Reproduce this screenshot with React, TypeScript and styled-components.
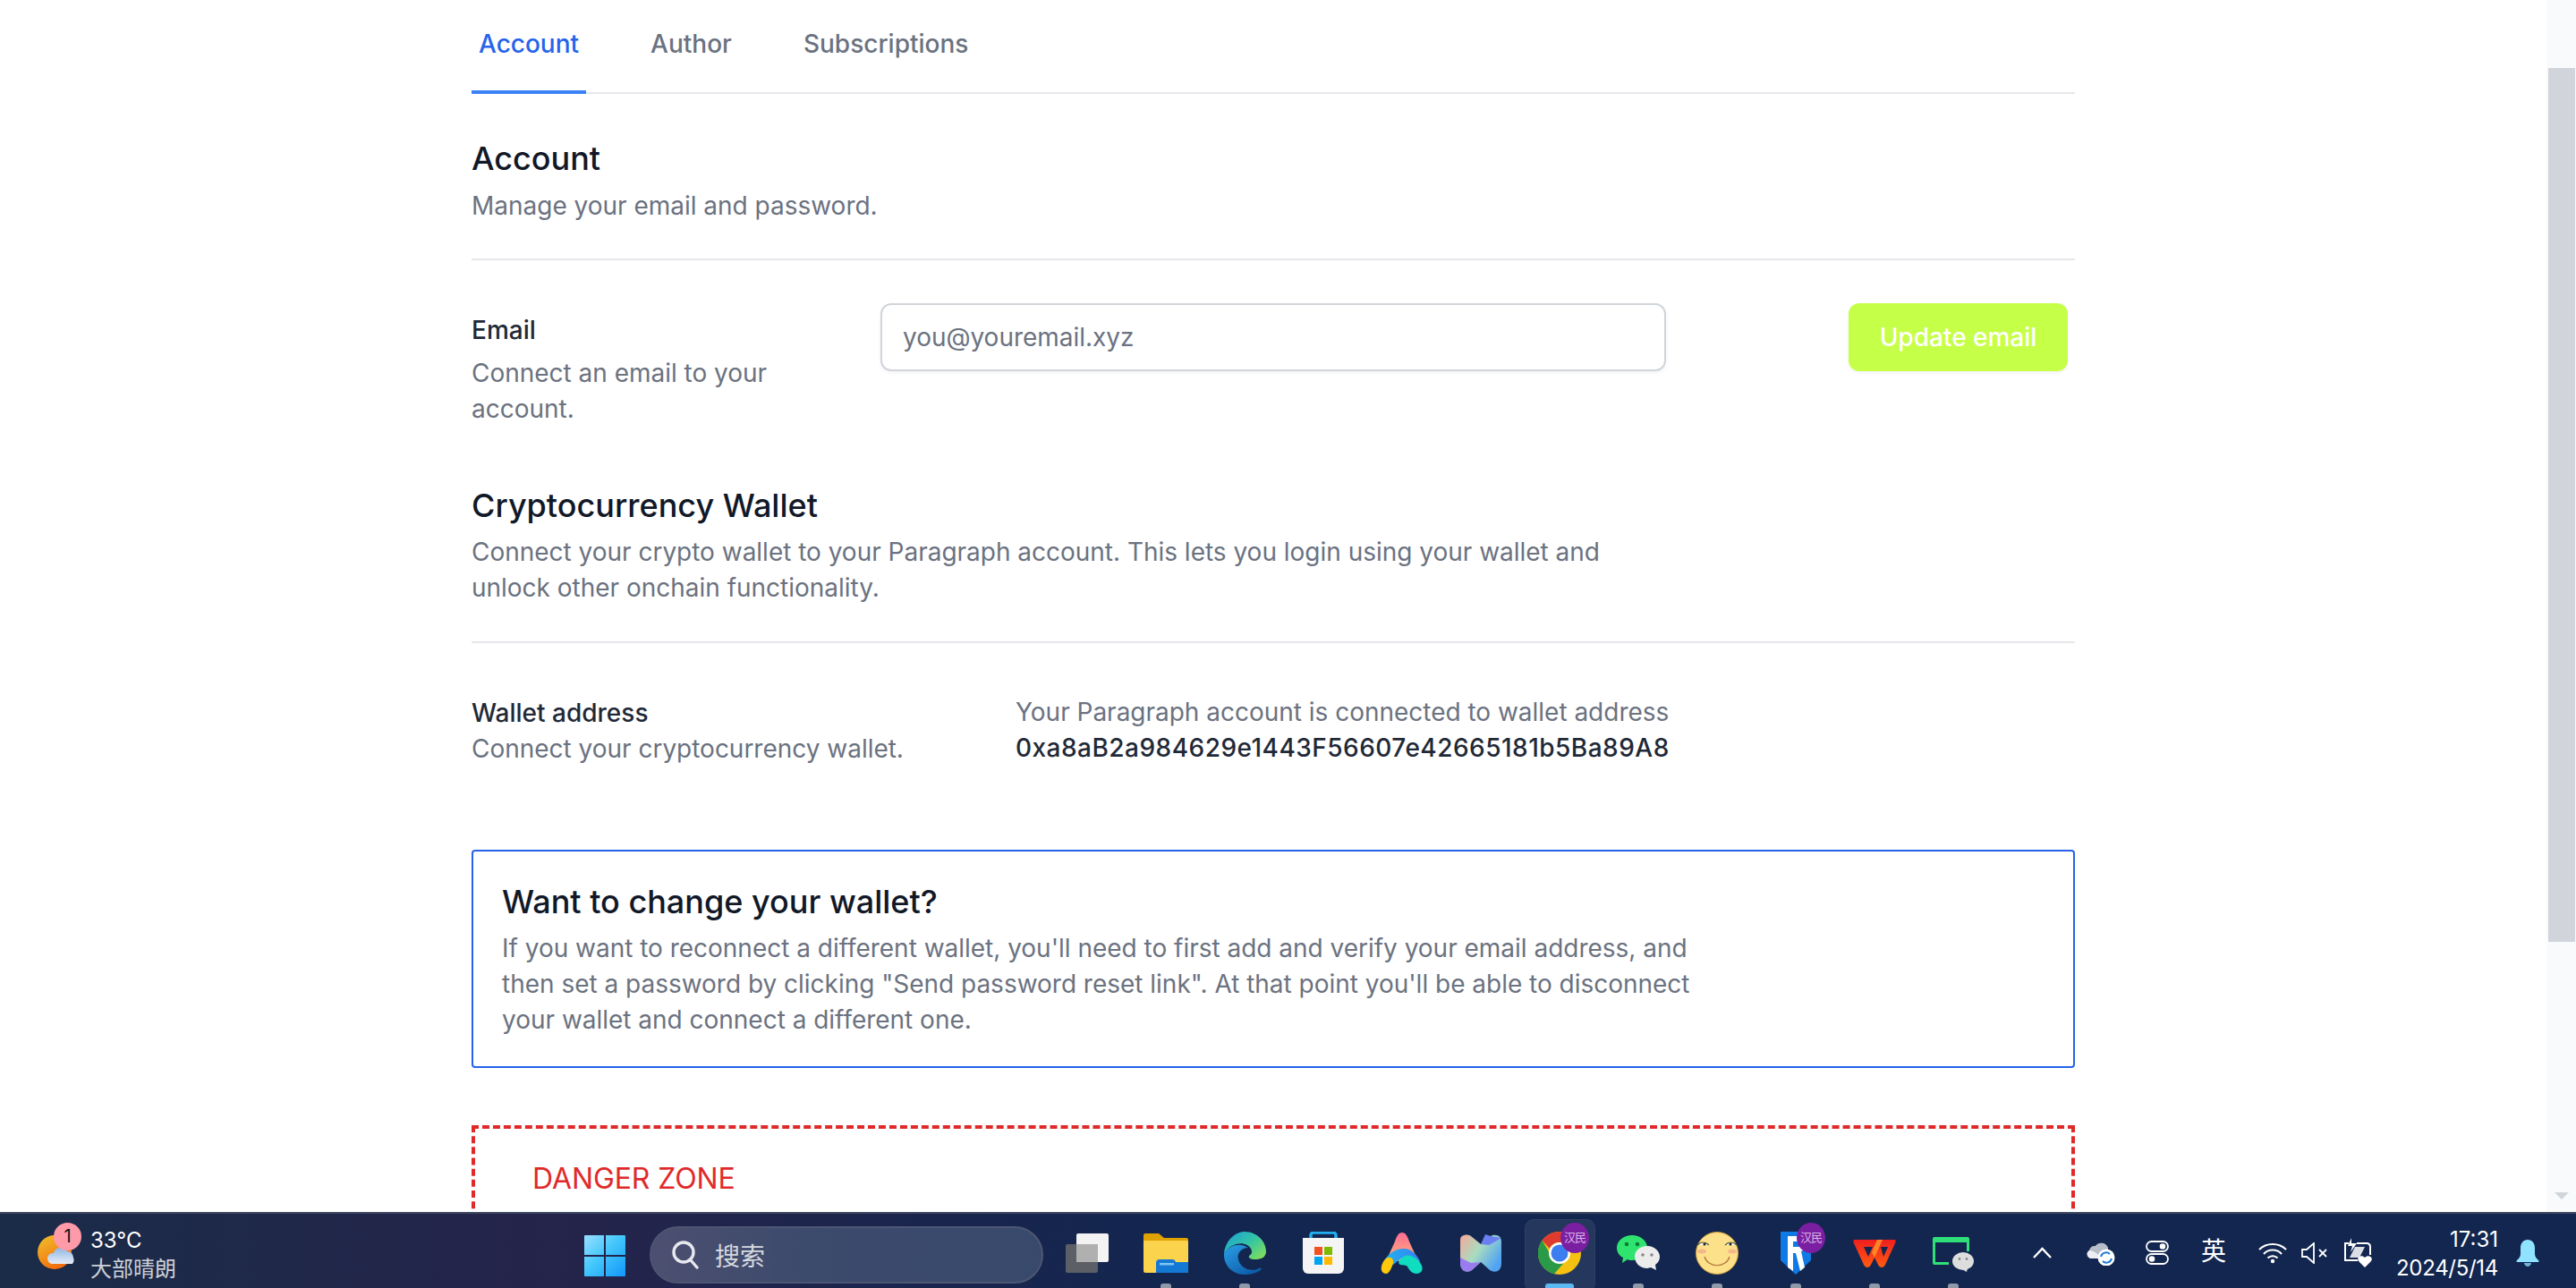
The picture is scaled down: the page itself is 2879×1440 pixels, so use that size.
import React from "react";
import styled, { createGlobalStyle } from "styled-components";

const Global = createGlobalStyle`
  html, body { margin: 0; padding: 0; height: 100%; background: #fff; overflow: hidden; }
  body { font-family: Inter, "Noto Sans CJK SC", sans-serif; }
  #root { height: 100%; }
  * { box-sizing: border-box; }
`;

const Screen = styled.div`
  width: 2879px; height: 1440px; display: flex; flex-direction: column; overflow: hidden;
`;
const Viewport = styled.div`
  height: 1355px; display: flex; overflow: hidden; flex: none;
`;
const PageArea = styled.main`
  flex: 1; min-width: 0; padding-left: 527px; overflow: hidden;
`;
const Content = styled.div`
  width: 1792px;
`;
const Tabs = styled.nav`
  display: flex; gap: 64px; height: 105px; border-bottom: 2px solid #e5e7eb;
`;
const Tab = styled.a<{ $active?: boolean }>`
  height: 105px; padding: 29px 8px 0; font-size: 28px; line-height: 40px; font-weight: 450;
  color: ${p => (p.$active ? "#2563eb" : "#6b7280")};
  border-bottom: 4px solid ${p => (p.$active ? "#3b82f6" : "transparent")};
`;
const Heading = styled.h2<{ $top?: number }>`
  margin: ${p => p.$top ?? 0}px 0 0; font-size: 36px; line-height: 56px; font-weight: 450; color: #111827;
`;
const Muted = styled.p<{ $top?: number; $max?: number }>`
  margin: ${p => p.$top ?? 0}px 0 0; font-size: 28px; line-height: 40px; font-weight: 400; color: #6b7280; letter-spacing: -0.015px;
  max-width: ${p => (p.$max ? `${p.$max}px` : "none")};
`;
const Divider = styled.hr<{ $top: number }>`
  margin: ${p => p.$top}px 0 0; height: 2px; border: 0; background: #e5e7eb;
`;
const EmailRow = styled.div`
  display: flex; align-items: flex-start; margin-top: 48px;
`;
const FieldLabel = styled.div`
  flex: none; width: 457px; padding: 10px 40px 0 0;
`;
const LabelText = styled.div`
  font-size: 28px; line-height: 40px; font-weight: 450; color: #1f2937;
`;
const EmailInput = styled.input`
  flex: none; width: 878px; height: 76px; padding: 0 23px; border: 2px solid #d1d5db; border-radius: 12px;
  font: 400 28px Inter, sans-serif; letter-spacing: -0.03px; color: #111827; background: #fff; box-shadow: 0 2px 4px rgba(0,0,0,.05); outline: none;
  &::placeholder { color: #6b7280; opacity: 1; }
`;
const UpdateButton = styled.button`
  flex: none; width: 245px; height: 76px; margin-left: auto; margin-right: 8px; border: 0; border-radius: 12px;
  background: #c6ff47; color: #fff; font: 500 28px Inter, sans-serif; box-shadow: 0 2px 4px rgba(0,0,0,.05);
`;
const WalletRow = styled.div`
  display: flex; margin-top: 57px;
`;
const WalletLabel = styled.div`
  flex: none; width: 608px; padding-top: 1px;
`;
const WalletAddress = styled.div`
  font-size: 28px; line-height: 40px; font-weight: 500; color: #1f2937; letter-spacing: 0.48px;
`;
const InfoBox = styled.section`
  margin-top: 93px; height: 244px; padding: 28px 32px 0; border: 2px solid #2563eb; border-radius: 4px;
`;
const DangerBox = styled.section`
  margin-top: 64px; height: 300px; padding: 32px 64px; border: 4px dashed #e02a2a;
`;
const DangerTitle = styled.h3`
  margin: 0; font-size: 32px; line-height: 48px; font-weight: 400; color: #e02a2a; letter-spacing: -0.1px;
`;
const ScrollTrack = styled.aside`
  flex: none; width: 33px; height: 1355px; background: #f9fafb; padding: 76px 1px 0 2px; display: flex; flex-direction: column;
`;
const ScrollThumb = styled.div`
  height: 977px; background: #d1d5db;
`;
const ScrollArrow = styled.div`
  margin: 280px auto 0; width: 0; height: 0; border-left: 8px solid transparent; border-right: 8px solid transparent; border-top: 8px solid #d1d5db;
`;

const Taskbar = styled.footer`
  flex: none; height: 85px; display: flex; align-items: stretch; color: #fff;
  border-top: 2px solid #404860;
  background: linear-gradient(90deg, #1a2c48 0, #25244b 620px, #13264f 1300px, #12264f 100%);
`;
const LeftArea = styled.div`
  flex: none; width: 653px; display: flex; padding-left: 42px; align-items: flex-start;
`;
const WeatherIcon = styled.div`
  position: relative; width: 50px; height: 83px; flex: none;
`;
const WeatherBadge = styled.span`
  position: absolute; left: 18px; top: 10px; width: 31px; height: 31px; border-radius: 50%; background: #ff9aa8;
  color: #111; font-size: 20px; line-height: 31px; text-align: center;
`;
const WeatherText = styled.div`
  margin-left: 9px; padding-top: 14px; font-size: 24px; line-height: 32px;
`;
const WeatherSub = styled.div`
  color: #ccd0d8;
`;
const StartCell = styled.div`
  flex: none; width: 73px; padding-top: 24px;
`;
const SearchPill = styled.div`
  flex: none; width: 440px; height: 64px; margin-top: 14px; border-radius: 32px; padding-left: 23px;
  display: flex; align-items: center; gap: 18px; font-size: 28px; color: #d5d8df;
  background: linear-gradient(90deg, #4c4f70, #3c4a6c 40%, #384a6c); border: 2px solid #4d5672;
`;
const Apps = styled.div`
  flex: none; margin-left: 5px; display: flex;
`;
const AppCell = styled.div<{ $active?: boolean }>`
  position: relative; flex: none; width: 88px; height: 83px; display: flex; align-items: center; justify-content: center; padding-top: 5px;
  ${p => p.$active ? `&::before { content: ""; position: absolute; left: 5px; right: 4px; top: 6px; bottom: -4px; border-radius: 10px; background: rgba(255,255,255,.08); border: 1px solid rgba(255,255,255,.05); }` : ""}
  > svg { position: relative; }
`;
const RunDot = styled.span<{ $active?: boolean }>`
  position: absolute; bottom: 0; left: 50%; transform: translateX(-50%); height: 5px; border-radius: 3px 3px 0 0;
  width: ${p => (p.$active ? 32 : 12)}px; background: ${p => (p.$active ? "#5cb8f5" : "#8f99a8")};
`;
const HanBadge = styled.span`
  position: absolute; left: 45px; top: 10px; width: 32px; height: 34px; border-radius: 50%; background: #7b1fa2;
  font-size: 13px; line-height: 32px; text-align: center; color: #d9b3e6; white-space: nowrap; letter-spacing: -1px;
`;
const Tray = styled.div`
  flex: 1; display: flex; align-items: center; padding-left: 0; position: relative;
`;
const TrayItem = styled.div<{ $left: number }>`
  flex: none; margin-left: ${p => p.$left}px; display: flex; align-items: center; padding-top: 4px;
`;
const TrayGlyph = styled.span`
  font-size: 28px; line-height: 1; color: #fff; margin-top: -4px;
`;
const Clock = styled.div`
  flex: none; width: 140px; text-align: right; font-size: 24px; line-height: 32px; padding-top: 7px;
`;
const ClockDate = styled.div`
  letter-spacing: -0.3px;
`;

const SunCloud = () => (
  <svg width="50" height="83" viewBox="0 0 50 83">
    <defs>
      <linearGradient id="sun" x1="0" y1="0" x2="0.6" y2="1">
        <stop offset="0" stopColor="#eec22c" /><stop offset="1" stopColor="#f56a0c" />
      </linearGradient>
      <linearGradient id="cl" x1="0" y1="0" x2="0" y2="1">
        <stop offset="0" stopColor="#8fb4e4" /><stop offset="1" stopColor="#e6eef8" />
      </linearGradient>
    </defs>
    <circle cx="19" cy="43" r="19" fill="url(#sun)" />
    <path d="M20 55a6 6 0 0 1 2-12 8 8 0 0 1 15-2 7 7 0 0 1 7 7 7 7 0 0 1-1 7z" fill="url(#cl)" transform="translate(-4 1)" />
  </svg>
);
const Win = () => (
  <svg width="46" height="46" viewBox="0 0 46 46" style={{ display: "block" }}>
    <defs>
      <linearGradient id="w" x1="0" y1="0" x2="1" y2="1">
        <stop offset="0" stopColor="#9adfff" /><stop offset=".45" stopColor="#45c8fb" /><stop offset="1" stopColor="#1197fb" />
      </linearGradient>
    </defs>
    <path fill="url(#w)" d="M1 0h21v22H0V1a1 1 0 0 1 1-1zM24 0h21a1 1 0 0 1 1 1v21H24zM0 24h22v22H1a1 1 0 0 1-1-1zM24 24h22v21a1 1 0 0 1-1 1H24z" />
  </svg>
);
const SearchGlass = () => (
  <svg width="30" height="32" viewBox="0 0 30 32" fill="none" stroke="#e8e9ee" strokeWidth="3.4" strokeLinecap="round">
    <circle cx="13" cy="13" r="11" /><path d="M21 22l7 8" />
  </svg>
);
const TaskView = () => (
  <svg width="48" height="44" viewBox="0 0 48 44">
    <rect x="0" y="12" width="36" height="32" rx="2" fill="#5d5f66" />
    <rect x="12" y="0" width="36" height="32" rx="2" fill="#f3f3f3" />
    <rect x="12" y="12" width="24" height="20" fill="#b0b0b0" />
  </svg>
);
const Folder = () => (
  <svg width="50" height="44" viewBox="0 0 50 44">
    <path d="M2 0h15l6 5h25a2 2 0 0 1 2 2v6H0V2a2 2 0 0 1 2-2z" fill="#e0a200" />
    <path d="M0 8h48a2 2 0 0 1 2 2v32a2 2 0 0 1-2 2H2a2 2 0 0 1-2-2z" fill="#fcd34d" />
    <path d="M14 32a4 4 0 0 1 4-3h14a4 4 0 0 1 4 3l14 0v10a2 2 0 0 1-2 2H14z" fill="#1479d4" />
    <rect x="18" y="33" width="16" height="2.5" fill="#7fc4f2" />
  </svg>
);
const Edge = () => (
  <svg width="48" height="48" viewBox="0 0 48 48">
    <defs>
      <linearGradient id="e1" x1="0" y1="0" x2="1" y2="0.8"><stop offset="0" stopColor="#1a9fd8" /><stop offset=".55" stopColor="#33c4a6" /><stop offset="1" stopColor="#7ddc5e" /></linearGradient>
      <linearGradient id="e2" x1="0" y1="0" x2="0.8" y2="1"><stop offset="0" stopColor="#2a9fe6" /><stop offset="1" stopColor="#0c5aa6" /></linearGradient>
    </defs>
    <path d="M1 24C3 9 14 0 24 0c14 0 24 11 24 22 0 7-6 9-12 9-6 0-8-2-7-4 3-2 4-4 2-8C27 11 11 10 1 24z" fill="url(#e1)" />
    <path d="M1 24C8 14 20 12 28 18c-8 0-13 7-11 13 2 9 13 15 23 10 2-1 4 0 2 2-6 4-12 5-18 5C10 48 0 37 1 24z" fill="url(#e2)" />
  </svg>
);
const Store = () => (
  <svg width="46" height="48" viewBox="0 0 46 48">
    <path d="M9 12V4a3 3 0 0 1 3-3h22a3 3 0 0 1 3 3v8" fill="none" stroke="#22aef0" strokeWidth="3.5" />
    <path d="M0 7h46v34a6 6 0 0 1-6 6H6a6 6 0 0 1-6-6z" fill="#f4f4f4" />
    <rect x="13" y="17" width="9" height="9" fill="#f25022" /><rect x="24" y="17" width="9" height="9" fill="#7fba00" />
    <rect x="13" y="28" width="9" height="9" fill="#00a4ef" /><rect x="24" y="28" width="9" height="9" fill="#ffb900" />
  </svg>
);
const ArcA = () => (
  <svg width="48" height="46" viewBox="0 0 48 46">
    <defs>
      <linearGradient id="a1" x1="0" y1="0" x2="0" y2="1"><stop offset="0" stopColor="#ff6d92" /><stop offset="1" stopColor="#fcb27b" /></linearGradient>
      <linearGradient id="a2" x1="0" y1="0" x2="1" y2="0"><stop offset="0" stopColor="#1db4f0" /><stop offset="1" stopColor="#3a7ff0" /></linearGradient>
    </defs>
    <path d="M24 0c4 0 6 4 8 10l10 22H6l10-22c2-6 4-10 8-10z" fill="url(#a1)" />
    <path d="M4 32c4-8 12-14 22-14 8 0 14 6 18 14l-10 6-10-10-10 8z" fill="url(#a2)" />
    <path d="M1 38c1-5 4-9 7-10 4-1 7 2 6 6-1 4-4 12-8 12-4 0-6-4-5-8z" fill="#ffc80a" />
    <path d="M20 34c2-6 8-10 13-8 7 2 11 6 13 11 2 5-1 9-6 9-5 0-8-4-10-8-2-3-8 0-10-4z" fill="#10dcc0" />
  </svg>
);
const Copilot = () => (
  <svg width="46" height="42" viewBox="0 0 46 42">
    <defs>
      <linearGradient id="c1" x1="0" y1="0" x2="1" y2="0.6"><stop offset="0" stopColor="#f7a79a" /><stop offset=".5" stopColor="#a8dcc0" /><stop offset="1" stopColor="#52a4f2" /></linearGradient>
    </defs>
    <path d="M2 2c3-2 7-2 10 0l11 9L34 2c3-2 9-2 11 2 1 2 1 4 1 6v22c0 4-1 7-4 9-3 1-6 1-9-1L23 31l-10 9c-3 2-7 2-10 0-2-2-3-5-3-8V8c0-3 0-5 2-6z" fill="url(#c1)" />
    <path d="M0 26l12 6 11-1-10 9c-3 2-7 2-10 0-2-2-3-5-3-8z" fill="#9a7cf0" />
    <path d="M28 0l6 2 11 2c-3 3-13 8-13 8l-9-1z" fill="#6a80f0" />
  </svg>
);
const Chrome = () => (
  <svg width="48" height="48" viewBox="0 0 48 48">
    <circle cx="24" cy="24" r="24" fill="#f5c211" />
    <path d="M24 0a24 24 0 0 1 20.8 12H24a12 12 0 0 0-11 7L4.5 9.8A24 24 0 0 1 24 0z" fill="#e03c2e" />
    <path d="M4.5 9.8L14 26a12 12 0 0 0 14.5 9.2L18 47.3A24 24 0 0 1 4.5 9.8z" fill="#2b9a46" />
    <circle cx="24" cy="24" r="12" fill="#fff" /><circle cx="24" cy="24" r="9.5" fill="#3c7df0" />
  </svg>
);
const WeChat = () => (
  <svg width="48" height="40" viewBox="0 0 48 40">
    <path d="M17 0c9 0 17 6 17 14 0 8-8 14-17 14-2 0-4 0-5-1l-6 4 1-6C3 23 0 19 0 14 0 6 8 0 17 0z" fill="#2ee46f" />
    <circle cx="11" cy="10" r="2.3" fill="#0c7a3a" /><circle cx="23" cy="10" r="2.3" fill="#0c7a3a" />
    <path d="M34 12c8 0 14 6 14 12 0 4-2 7-5 9l1 6-6-3c-1 0-3 1-4 1-8 0-14-6-14-13s6-12 14-12z" fill="#ececec" />
    <circle cx="29" cy="22" r="1.8" fill="#888" /><circle cx="39" cy="22" r="1.8" fill="#888" />
  </svg>
);
const Smiley = () => (
  <svg width="48" height="48" viewBox="0 0 48 48">
    <circle cx="24" cy="24" r="23.5" fill="#fde08a" stroke="#c99a3a" strokeWidth="1" />
    <ellipse cx="7" cy="22" rx="5" ry="2.5" fill="#f4b78a" /><ellipse cx="41" cy="22" rx="5" ry="2.5" fill="#f4b78a" />
    <path d="M2 15c4-4 9-4 13 0" fill="#fff" stroke="#553" strokeWidth="1.2" /><path d="M33 15c4-4 9-4 13 0" fill="#fff" stroke="#553" strokeWidth="1.2" />
    <circle cx="10" cy="14" r="1.6" fill="#222" /><circle cx="39" cy="14" r="1.6" fill="#222" />
    <path d="M10 28c4 13 24 13 28 0" fill="none" stroke="#b0743a" strokeWidth="1.2" />
  </svg>
);
const Shield = () => (
  <svg width="34" height="48" viewBox="0 0 34 48">
    <path d="M0 0h34v32L17 48 0 32z" fill="#0f7ae5" />
    <path d="M8 5h12a7 7 0 0 1 7 7v4a6 6 0 0 1-4 6l4 18-5 4-5-20h-3v20l-6-4z" fill="#fff" />
    <rect x="14" y="11" width="7" height="6" fill="#0f7ae5" />
  </svg>
);
const Wps = () => (
  <svg width="48" height="31" viewBox="0 0 48 31">
    <defs>
      <linearGradient id="wp" x1="0" y1="0" x2="0" y2="1"><stop offset="0" stopColor="#f01f1f" /><stop offset="1" stopColor="#ff5a10" /></linearGradient>
    </defs>
    <path fillRule="evenodd" d="M2 0h44c2 0 2 2 1 4L36 28c-2 4-6 4-8 0l-4-8-4 8c-2 4-6 4-8 0L1 4C0 2 0 0 2 0zM12 8l5 11 5-11zM31 8l3 11 5-11z" fill="url(#wp)" />
    <path d="M27 0h6l-9 20-3-6z" fill="#ff9a2a" opacity=".8" />
  </svg>
);
const GreenScreen = () => (
  <svg width="46" height="42" viewBox="0 -3 46 42">
    <path d="M2 0h37a2 2 0 0 1 2 2v14h-3V6H3v22h15v3H2a2 2 0 0 1-2-2V2a2 2 0 0 1 2-2z" fill="#2fe07a" />
    <ellipse cx="34" cy="27" rx="12" ry="10" fill="#dcdede" />
    <path d="M31 35l8 0-1 4z" fill="#dcdede" />
    <circle cx="30" cy="24.500" r="1.400" fill="#888" /><circle cx="38" cy="24.500" r="1.400" fill="#888" />
  </svg>
);
const Chevron = () => (
  <svg width="21" height="13" viewBox="0 0 21 13" fill="none" stroke="#fff" strokeWidth="2.4"><path d="M1 12L10.5 2 20 12" /></svg>
);
const CloudSync = () => (
  <svg width="33" height="28" viewBox="0 0 33 28">
    <path d="M5 20a5 5 0 0 1-1-9 6 6 0 0 1 7-5 8 8 0 0 1 14 2v12z" fill="#b7bcc9" />
    <path d="M5 20a5 5 0 0 1-1-9c3 0 10 2 12 9z" fill="#eceef2" />
    <circle cx="23" cy="19" r="9.5" fill="#fff" />
    <path d="M17 18a6 6 0 0 1 10-3M29 20a6 6 0 0 1-10 3" fill="none" stroke="#1a78d0" strokeWidth="2" />
  </svg>
);
const Toggles = () => (
  <svg width="26" height="27" viewBox="0 0 26 27" fill="none" stroke="#fff" strokeWidth="1.8">
    <rect x="1" y="1" width="24" height="11" rx="5.5" /><rect x="1" y="15" width="24" height="11" rx="5.5" />
    <circle cx="19" cy="6.5" r="2.4" fill="#fff" /><circle cx="7" cy="20.5" r="2.4" fill="#fff" />
  </svg>
);
const Wifi = () => (
  <svg width="32" height="24" viewBox="0 0 32 24" fill="none" stroke="#fff" strokeWidth="2.2">
    <path d="M1 8c8-8 22-8 30 0M6 13c5-6 15-6 20 0M10.500 17.500c3-3 8-3 11 0" /><circle cx="16" cy="21" r="2.200" fill="#fff" stroke="none" />
  </svg>
);
const Muted2 = () => (
  <svg width="30" height="24" viewBox="0 0 30 24" fill="none" stroke="#fff" strokeWidth="1.800">
    <path d="M1 8h5l8-7v22l-8-7H1z" /><path d="M20 8l8 8M28 8l-8 8" />
  </svg>
);
const Battery = () => (
  <svg width="33" height="33" viewBox="0 0 33 33" fill="none" stroke="#fff" strokeWidth="2">
    <path d="M6 6H2v19h14M15 6h12a4 4 0 0 1 3 4v9" /><path d="M9 0l-4 9h5l-2 7 7-10H9z" fill="#fff" stroke="none" />
    <path d="M7 22l6-12h11l-6 12z" fill="#fff" stroke="none" opacity=".85" />
    <path d="M24 33l-7-7c-3-4 3-8 7-4 4-4 10 0 7 4z" fill="#fff" stroke="none" />
  </svg>
);
const Bell = () => (
  <svg width="26" height="30" viewBox="0 0 26 30">
    <path d="M13 0c5 0 8 4 8 9v7c0 3 2 5 4 7 1 1 1 2-1 2H2c-2 0-2-1-1-2 2-2 4-4 4-7V9c0-5 3-9 8-9z" fill="#8fe3ff" />
    <path d="M9 26h8c0 2-2 4-4 4s-4-2-4-4z" fill="#8fe3ff" opacity=".75" />
  </svg>
);

type AppDef = { node: React.ReactNode; run?: boolean; active?: boolean; han?: boolean };
const apps: AppDef[] = [
  { node: <TaskView /> },
  { node: <Folder />, run: true },
  { node: <Edge />, run: true },
  { node: <Store /> },
  { node: <ArcA /> },
  { node: <Copilot /> },
  { node: <Chrome />, run: true, active: true, han: true },
  { node: <WeChat />, run: true },
  { node: <Smiley />, run: true },
  { node: <Shield />, run: true, han: true },
  { node: <Wps />, run: true },
  { node: <GreenScreen />, run: true },
];

export default function App() {
  return (
    <Screen>
      <Global />
      <Viewport>
        <PageArea>
          <Content>
            <Tabs>
              <Tab $active>Account</Tab>
              <Tab>Author</Tab>
              <Tab>Subscriptions</Tab>
            </Tabs>
            <Heading $top={44}>Account</Heading>
            <Muted $top={5}>Manage your email and password.</Muted>
            <Divider $top={39} />
            <EmailRow>
              <FieldLabel>
                <LabelText>Email</LabelText>
                <Muted $top={8}>Connect an email to your account.</Muted>
              </FieldLabel>
              <EmailInput placeholder="you@youremail.xyz" readOnly />
              <UpdateButton>Update email</UpdateButton>
            </EmailRow>
            <Heading $top={60}>Cryptocurrency Wallet</Heading>
            <Muted $top={4} $max={1290}>
              Connect your crypto wallet to your Paragraph account. This lets you login using your wallet and unlock other onchain functionality.
            </Muted>
            <Divider $top={40} />
            <WalletRow>
              <WalletLabel>
                <LabelText>Wallet address</LabelText>
                <Muted>Connect your cryptocurrency wallet.</Muted>
              </WalletLabel>
              <div>
                <Muted>Your Paragraph account is connected to wallet address</Muted>
                <WalletAddress>0xa8aB2a984629e1443F56607e42665181b5Ba89A8</WalletAddress>
              </div>
            </WalletRow>
            <InfoBox>
              <Heading>Want to change your wallet?</Heading>
              <Muted $top={4} $max={1344}>
                If you want to reconnect a different wallet, you'll need to first add and verify your email address, and then set a password by clicking "Send password reset link". At that point you'll be able to disconnect your wallet and connect a different one.
              </Muted>
            </InfoBox>
            <DangerBox>
              <DangerTitle>DANGER ZONE</DangerTitle>
            </DangerBox>
          </Content>
        </PageArea>
        <ScrollTrack>
          <ScrollThumb />
          <ScrollArrow />
        </ScrollTrack>
      </Viewport>
      <Taskbar>
        <LeftArea>
          <WeatherIcon>
            <SunCloud />
            <WeatherBadge>1</WeatherBadge>
          </WeatherIcon>
          <WeatherText>
            <div>33°C</div>
            <WeatherSub>大部晴朗</WeatherSub>
          </WeatherText>
        </LeftArea>
        <StartCell><Win /></StartCell>
        <SearchPill>
          <SearchGlass />
          <span>搜索</span>
        </SearchPill>
        <Apps>
          {apps.map((a, i) => (
            <AppCell key={i} $active={a.active}>
              {a.node}
              {a.han && <HanBadge>汉民</HanBadge>}
              {a.run && <RunDot $active={a.active} />}
            </AppCell>
          ))}
        </Apps>
        <Tray>
          <TrayItem $left={45}><Chevron /></TrayItem>
          <TrayItem $left={38}><CloudSync /></TrayItem>
          <TrayItem $left={34}><Toggles /></TrayItem>
          <TrayItem $left={36}><TrayGlyph>英</TrayGlyph></TrayItem>
          <TrayItem $left={36}><Wifi /></TrayItem>
          <TrayItem $left={16}><Muted2 /></TrayItem>
          <TrayItem $left={17}><Battery /></TrayItem>
          <Clock>
            <div>17:31</div>
            <ClockDate>2024/5/14</ClockDate>
          </Clock>
          <TrayItem $left={20}><Bell /></TrayItem>
        </Tray>
      </Taskbar>
    </Screen>
  );
}
